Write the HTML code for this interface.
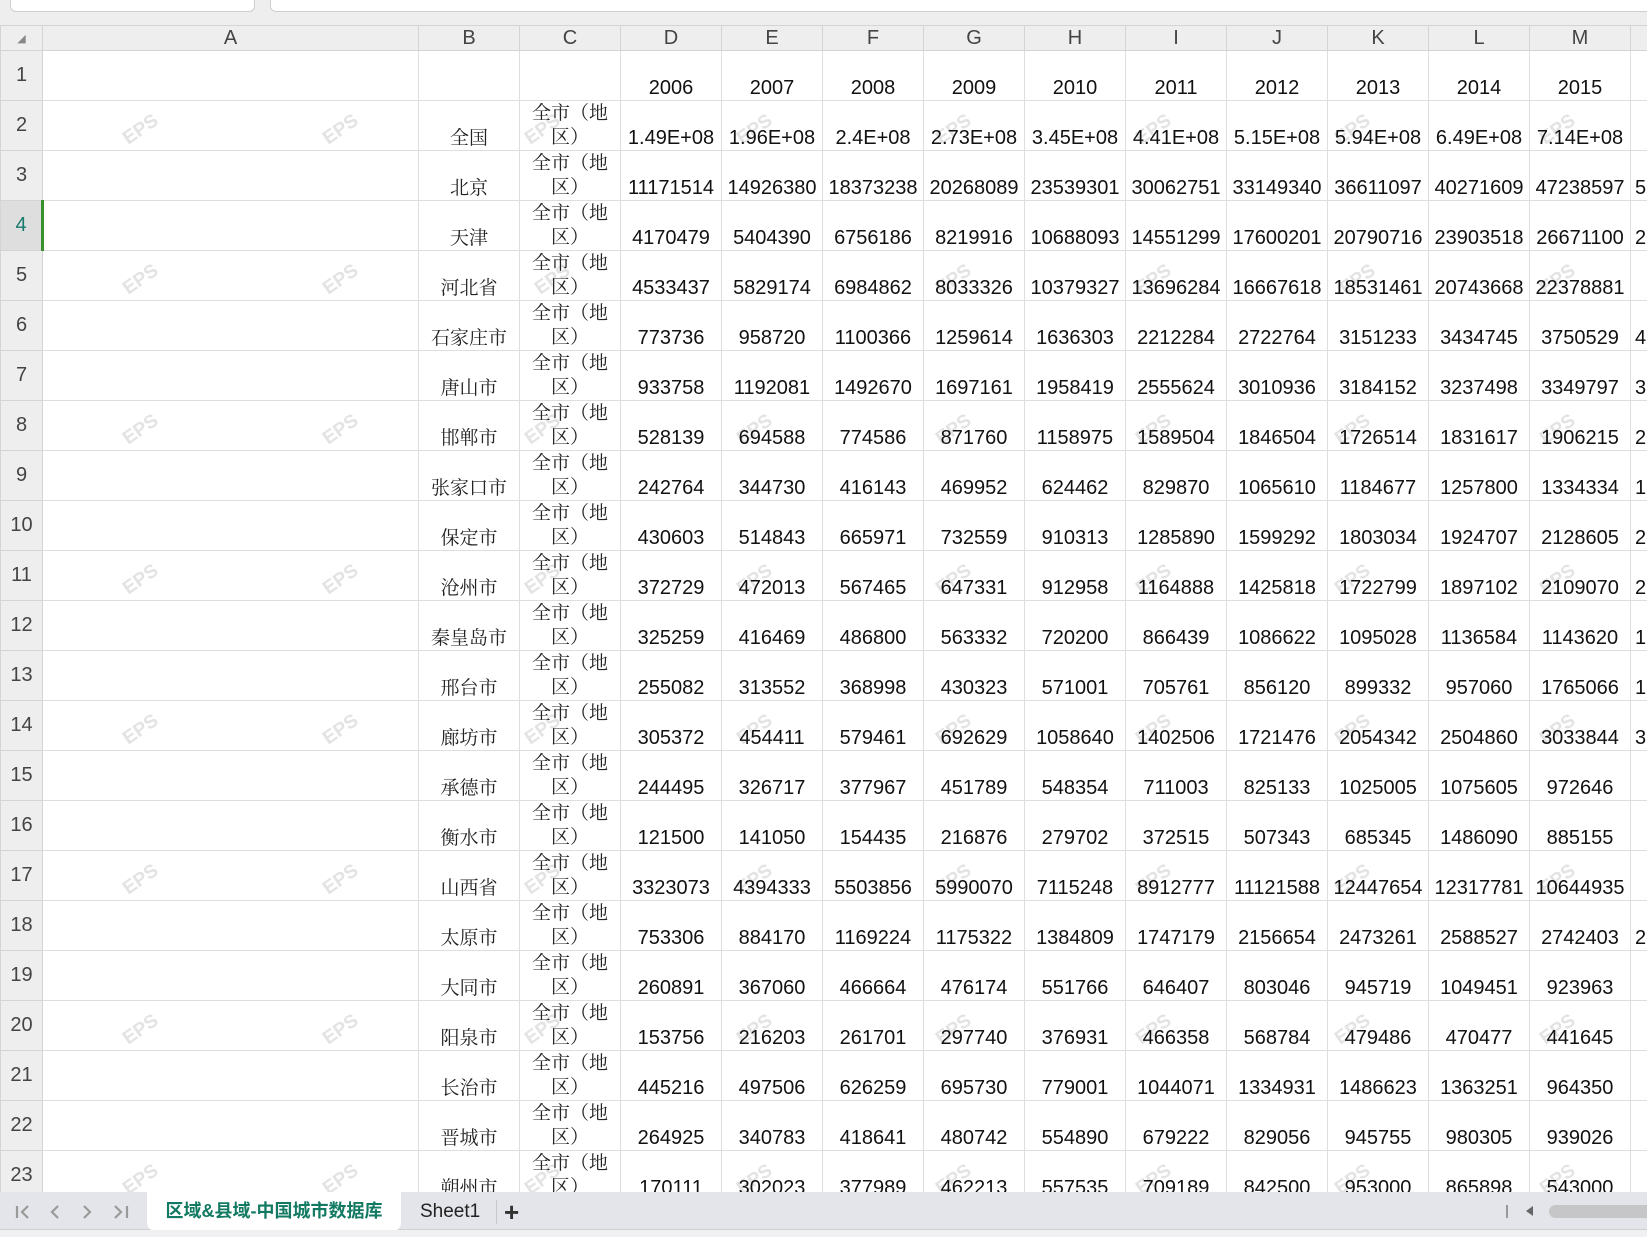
<!DOCTYPE html>
<html><head><meta charset="utf-8">
<style>
*{margin:0;padding:0;box-sizing:border-box}
body{width:1647px;height:1237px;overflow:hidden;background:#fff;position:relative;font-family:"Liberation Sans",Arial,sans-serif}
#top{position:absolute;left:0;top:0;width:1647px;height:25px;background:#eeeeee}
#top .b1{position:absolute;left:10px;top:-6px;width:245px;height:18px;background:#fff;border:1px solid #cfcfcf;border-radius:0 0 6px 6px}
#top .b2{position:absolute;left:270px;top:-6px;width:1390px;height:18px;background:#fff;border:1px solid #cfcfcf;border-radius:0 0 6px 6px}
#grid{position:absolute;left:0;top:25px;width:1647px;height:1167px;overflow:hidden;z-index:2}
table{border-collapse:collapse;table-layout:fixed;width:1731px}
td{border:1px solid #dedede;height:50px;overflow:hidden;white-space:nowrap;vertical-align:bottom;text-align:center;font-size:20px;color:#111;padding:0}
tr.h td{height:25px;background:#eeeeee;color:#444;font-size:20px;vertical-align:middle;padding:0;border-color:#d4d4d4;position:relative}
td.rh{background:#eeeeee;color:#444;vertical-align:middle;padding:0 0 0 0;font-size:20px;border-color:#d4d4d4}
td.rh.sel{background:#dedede;color:#1b7a6e;border-right:3px solid #3a8f2f}
td.b{font-family:"Liberation Serif","Noto Serif CJK SC",serif;font-size:19px;color:#222}
td.c{font-family:"Liberation Serif","Noto Serif CJK SC",serif;font-size:19px;color:#222;white-space:normal;line-height:24px;padding:0;word-break:break-all}
td.c span{display:block}
tr.h td.tri:after{content:"";position:absolute;left:0;bottom:-6px;border-left:5px solid #1e8a1e;border-bottom:5px solid transparent}
.wm{position:absolute;color:#e3e3e3;font-size:19px;font-weight:bold;transform:rotate(-35deg);font-family:"Liberation Sans",sans-serif;z-index:1}
#grid table{position:relative}
td{background:transparent}
#tabs{position:absolute;left:0;top:1192px;width:1647px;height:38px;background:#e4e5ea;border-bottom:1px solid #d0d0d4;z-index:3}
#bot{position:absolute;left:0;top:1230px;width:1647px;height:7px;background:#f0f0f2;z-index:3}
.tab{position:absolute;left:147px;top:0;width:254px;height:39px;background:#fff;border-radius:0 0 8px 8px;color:#127a62;font-weight:bold;font-size:18px;text-align:center;line-height:38px;font-family:"Liberation Sans","Noto Sans CJK SC",sans-serif}
</style></head><body>
<div id="top"><div class="b1"></div><div class="b2"></div></div>
<div id="grid">
<table>
<colgroup><col style="width:42px"><col style="width:376px"><col style="width:101px"><col style="width:101px"><col style="width:101px"><col style="width:101px"><col style="width:101px"><col style="width:101px"><col style="width:101px"><col style="width:101px"><col style="width:101px"><col style="width:101px"><col style="width:101px"><col style="width:101px"><col style="width:101px"></colgroup>
<tr class="h"><td style="font-size:11px;color:#888">◢</td><td>A</td><td>B</td><td>C</td><td class="tri">D</td><td class="tri">E</td><td class="tri">F</td><td class="tri">G</td><td class="tri">H</td><td class="tri">I</td><td class="tri">J</td><td class="tri">K</td><td class="tri">L</td><td class="tri">M</td><td class="tri"></td></tr>
<tr><td class="rh">1</td><td></td><td></td><td></td><td>2006</td><td>2007</td><td>2008</td><td>2009</td><td>2010</td><td>2011</td><td>2012</td><td>2013</td><td>2014</td><td>2015</td><td></td></tr>
<tr><td class="rh">2</td><td></td><td class="b">全国</td><td class="c"><span>全市（地</span>区）</td><td>1.49E+08</td><td>1.96E+08</td><td>2.4E+08</td><td>2.73E+08</td><td>3.45E+08</td><td>4.41E+08</td><td>5.15E+08</td><td>5.94E+08</td><td>6.49E+08</td><td>7.14E+08</td><td></td></tr>
<tr><td class="rh">3</td><td></td><td class="b">北京</td><td class="c"><span>全市（地</span>区）</td><td>11171514</td><td>14926380</td><td>18373238</td><td>20268089</td><td>23539301</td><td>30062751</td><td>33149340</td><td>36611097</td><td>40271609</td><td>47238597</td><td style="text-align:left;padding-left:4px">5</td></tr>
<tr><td class="rh sel">4</td><td></td><td class="b">天津</td><td class="c"><span>全市（地</span>区）</td><td>4170479</td><td>5404390</td><td>6756186</td><td>8219916</td><td>10688093</td><td>14551299</td><td>17600201</td><td>20790716</td><td>23903518</td><td>26671100</td><td style="text-align:left;padding-left:4px">2</td></tr>
<tr><td class="rh">5</td><td></td><td class="b">河北省</td><td class="c"><span>全市（地</span>区）</td><td>4533437</td><td>5829174</td><td>6984862</td><td>8033326</td><td>10379327</td><td>13696284</td><td>16667618</td><td>18531461</td><td>20743668</td><td>22378881</td><td></td></tr>
<tr><td class="rh">6</td><td></td><td class="b">石家庄市</td><td class="c"><span>全市（地</span>区）</td><td>773736</td><td>958720</td><td>1100366</td><td>1259614</td><td>1636303</td><td>2212284</td><td>2722764</td><td>3151233</td><td>3434745</td><td>3750529</td><td style="text-align:left;padding-left:4px">4</td></tr>
<tr><td class="rh">7</td><td></td><td class="b">唐山市</td><td class="c"><span>全市（地</span>区）</td><td>933758</td><td>1192081</td><td>1492670</td><td>1697161</td><td>1958419</td><td>2555624</td><td>3010936</td><td>3184152</td><td>3237498</td><td>3349797</td><td style="text-align:left;padding-left:4px">3</td></tr>
<tr><td class="rh">8</td><td></td><td class="b">邯郸市</td><td class="c"><span>全市（地</span>区）</td><td>528139</td><td>694588</td><td>774586</td><td>871760</td><td>1158975</td><td>1589504</td><td>1846504</td><td>1726514</td><td>1831617</td><td>1906215</td><td style="text-align:left;padding-left:4px">2</td></tr>
<tr><td class="rh">9</td><td></td><td class="b">张家口市</td><td class="c"><span>全市（地</span>区）</td><td>242764</td><td>344730</td><td>416143</td><td>469952</td><td>624462</td><td>829870</td><td>1065610</td><td>1184677</td><td>1257800</td><td>1334334</td><td style="text-align:left;padding-left:4px">1</td></tr>
<tr><td class="rh">10</td><td></td><td class="b">保定市</td><td class="c"><span>全市（地</span>区）</td><td>430603</td><td>514843</td><td>665971</td><td>732559</td><td>910313</td><td>1285890</td><td>1599292</td><td>1803034</td><td>1924707</td><td>2128605</td><td style="text-align:left;padding-left:4px">2</td></tr>
<tr><td class="rh">11</td><td></td><td class="b">沧州市</td><td class="c"><span>全市（地</span>区）</td><td>372729</td><td>472013</td><td>567465</td><td>647331</td><td>912958</td><td>1164888</td><td>1425818</td><td>1722799</td><td>1897102</td><td>2109070</td><td style="text-align:left;padding-left:4px">2</td></tr>
<tr><td class="rh">12</td><td></td><td class="b">秦皇岛市</td><td class="c"><span>全市（地</span>区）</td><td>325259</td><td>416469</td><td>486800</td><td>563332</td><td>720200</td><td>866439</td><td>1086622</td><td>1095028</td><td>1136584</td><td>1143620</td><td style="text-align:left;padding-left:4px">1</td></tr>
<tr><td class="rh">13</td><td></td><td class="b">邢台市</td><td class="c"><span>全市（地</span>区）</td><td>255082</td><td>313552</td><td>368998</td><td>430323</td><td>571001</td><td>705761</td><td>856120</td><td>899332</td><td>957060</td><td>1765066</td><td style="text-align:left;padding-left:4px">1</td></tr>
<tr><td class="rh">14</td><td></td><td class="b">廊坊市</td><td class="c"><span>全市（地</span>区）</td><td>305372</td><td>454411</td><td>579461</td><td>692629</td><td>1058640</td><td>1402506</td><td>1721476</td><td>2054342</td><td>2504860</td><td>3033844</td><td style="text-align:left;padding-left:4px">3</td></tr>
<tr><td class="rh">15</td><td></td><td class="b">承德市</td><td class="c"><span>全市（地</span>区）</td><td>244495</td><td>326717</td><td>377967</td><td>451789</td><td>548354</td><td>711003</td><td>825133</td><td>1025005</td><td>1075605</td><td>972646</td><td></td></tr>
<tr><td class="rh">16</td><td></td><td class="b">衡水市</td><td class="c"><span>全市（地</span>区）</td><td>121500</td><td>141050</td><td>154435</td><td>216876</td><td>279702</td><td>372515</td><td>507343</td><td>685345</td><td>1486090</td><td>885155</td><td></td></tr>
<tr><td class="rh">17</td><td></td><td class="b">山西省</td><td class="c"><span>全市（地</span>区）</td><td>3323073</td><td>4394333</td><td>5503856</td><td>5990070</td><td>7115248</td><td>8912777</td><td>11121588</td><td>12447654</td><td>12317781</td><td>10644935</td><td></td></tr>
<tr><td class="rh">18</td><td></td><td class="b">太原市</td><td class="c"><span>全市（地</span>区）</td><td>753306</td><td>884170</td><td>1169224</td><td>1175322</td><td>1384809</td><td>1747179</td><td>2156654</td><td>2473261</td><td>2588527</td><td>2742403</td><td style="text-align:left;padding-left:4px">2</td></tr>
<tr><td class="rh">19</td><td></td><td class="b">大同市</td><td class="c"><span>全市（地</span>区）</td><td>260891</td><td>367060</td><td>466664</td><td>476174</td><td>551766</td><td>646407</td><td>803046</td><td>945719</td><td>1049451</td><td>923963</td><td></td></tr>
<tr><td class="rh">20</td><td></td><td class="b">阳泉市</td><td class="c"><span>全市（地</span>区）</td><td>153756</td><td>216203</td><td>261701</td><td>297740</td><td>376931</td><td>466358</td><td>568784</td><td>479486</td><td>470477</td><td>441645</td><td></td></tr>
<tr><td class="rh">21</td><td></td><td class="b">长治市</td><td class="c"><span>全市（地</span>区）</td><td>445216</td><td>497506</td><td>626259</td><td>695730</td><td>779001</td><td>1044071</td><td>1334931</td><td>1486623</td><td>1363251</td><td>964350</td><td></td></tr>
<tr><td class="rh">22</td><td></td><td class="b">晋城市</td><td class="c"><span>全市（地</span>区）</td><td>264925</td><td>340783</td><td>418641</td><td>480742</td><td>554890</td><td>679222</td><td>829056</td><td>945755</td><td>980305</td><td>939026</td><td></td></tr>
<tr><td class="rh">23</td><td></td><td class="b">朔州市</td><td class="c"><span>全市（地</span>区）</td><td>170111</td><td>302023</td><td>377989</td><td>462213</td><td>557535</td><td>709189</td><td>842500</td><td>953000</td><td>865898</td><td>543000</td><td></td></tr>
</table>
</div>
<div class="wm" style="left:122px;top:119px">EPS</div><div class="wm" style="left:322px;top:119px">EPS</div>
<div class="wm" style="left:122px;top:269px">EPS</div><div class="wm" style="left:322px;top:269px">EPS</div>
<div class="wm" style="left:122px;top:419px">EPS</div><div class="wm" style="left:322px;top:419px">EPS</div>
<div class="wm" style="left:122px;top:569px">EPS</div><div class="wm" style="left:322px;top:569px">EPS</div>
<div class="wm" style="left:122px;top:719px">EPS</div><div class="wm" style="left:322px;top:719px">EPS</div>
<div class="wm" style="left:122px;top:869px">EPS</div><div class="wm" style="left:322px;top:869px">EPS</div>
<div class="wm" style="left:122px;top:1019px">EPS</div><div class="wm" style="left:322px;top:1019px">EPS</div>
<div class="wm" style="left:122px;top:1169px">EPS</div><div class="wm" style="left:322px;top:1169px">EPS</div>
<div class="wm" style="left:524px;top:119px">EPS</div><div class="wm" style="left:736px;top:119px">EPS</div><div class="wm" style="left:935px;top:119px">EPS</div><div class="wm" style="left:1135px;top:119px">EPS</div><div class="wm" style="left:1334px;top:119px">EPS</div><div class="wm" style="left:1539px;top:119px">EPS</div>
<div class="wm" style="left:534px;top:269px">EPS</div><div class="wm" style="left:935px;top:269px">EPS</div><div class="wm" style="left:1135px;top:269px">EPS</div><div class="wm" style="left:1339px;top:269px">EPS</div><div class="wm" style="left:1539px;top:269px">EPS</div>
<div class="wm" style="left:524px;top:419px">EPS</div><div class="wm" style="left:736px;top:419px">EPS</div><div class="wm" style="left:935px;top:419px">EPS</div><div class="wm" style="left:1135px;top:419px">EPS</div><div class="wm" style="left:1334px;top:419px">EPS</div><div class="wm" style="left:1539px;top:419px">EPS</div>
<div class="wm" style="left:524px;top:569px">EPS</div><div class="wm" style="left:736px;top:569px">EPS</div><div class="wm" style="left:935px;top:569px">EPS</div><div class="wm" style="left:1135px;top:569px">EPS</div><div class="wm" style="left:1334px;top:569px">EPS</div><div class="wm" style="left:1539px;top:569px">EPS</div>
<div class="wm" style="left:524px;top:719px">EPS</div><div class="wm" style="left:736px;top:719px">EPS</div><div class="wm" style="left:935px;top:719px">EPS</div><div class="wm" style="left:1135px;top:719px">EPS</div><div class="wm" style="left:1334px;top:719px">EPS</div><div class="wm" style="left:1539px;top:719px">EPS</div>
<div class="wm" style="left:524px;top:869px">EPS</div><div class="wm" style="left:736px;top:869px">EPS</div><div class="wm" style="left:935px;top:869px">EPS</div><div class="wm" style="left:1135px;top:869px">EPS</div><div class="wm" style="left:1334px;top:869px">EPS</div><div class="wm" style="left:1539px;top:869px">EPS</div>
<div class="wm" style="left:524px;top:1019px">EPS</div><div class="wm" style="left:736px;top:1019px">EPS</div><div class="wm" style="left:935px;top:1019px">EPS</div><div class="wm" style="left:1135px;top:1019px">EPS</div><div class="wm" style="left:1334px;top:1019px">EPS</div><div class="wm" style="left:1539px;top:1019px">EPS</div>
<div class="wm" style="left:524px;top:1169px">EPS</div><div class="wm" style="left:736px;top:1169px">EPS</div><div class="wm" style="left:935px;top:1169px">EPS</div><div class="wm" style="left:1135px;top:1169px">EPS</div><div class="wm" style="left:1334px;top:1169px">EPS</div><div class="wm" style="left:1539px;top:1169px">EPS</div>
<div id="tabs">
<svg style="position:absolute;left:0;top:0" width="140" height="38" viewBox="0 0 140 38" fill="none" stroke="#9a9a9a" stroke-width="2.2">
<path d="M17 14v12M28 14l-6 6 6 6"/><path d="M58 14l-6 6 6 6"/><path d="M84 14l6 6-6 6"/><path d="M115 14l6 6-6 6M127 14v12"/>
</svg>
<div class="tab">区域&amp;县域-中国城市数据库</div>
<div style="position:absolute;left:420px;top:0;line-height:40px;font-size:19px;color:#222">Sheet1</div>
<div style="position:absolute;left:496px;top:8px;width:1px;height:24px;background:#c8c8c8"></div>
<div style="position:absolute;left:504px;top:0;line-height:40px;font-size:26px;color:#333;font-weight:bold">+</div>
<div style="position:absolute;left:1506px;top:13px;width:2px;height:13px;background:#999"></div>
<div style="position:absolute;left:1526px;top:14px;border-right:7px solid #666;border-top:5px solid transparent;border-bottom:5px solid transparent"></div>
<div style="position:absolute;left:1549px;top:13px;width:110px;height:13px;background:#c6c6c9;border-radius:7px"></div>
</div>
<div id="bot"></div>
</body></html>
